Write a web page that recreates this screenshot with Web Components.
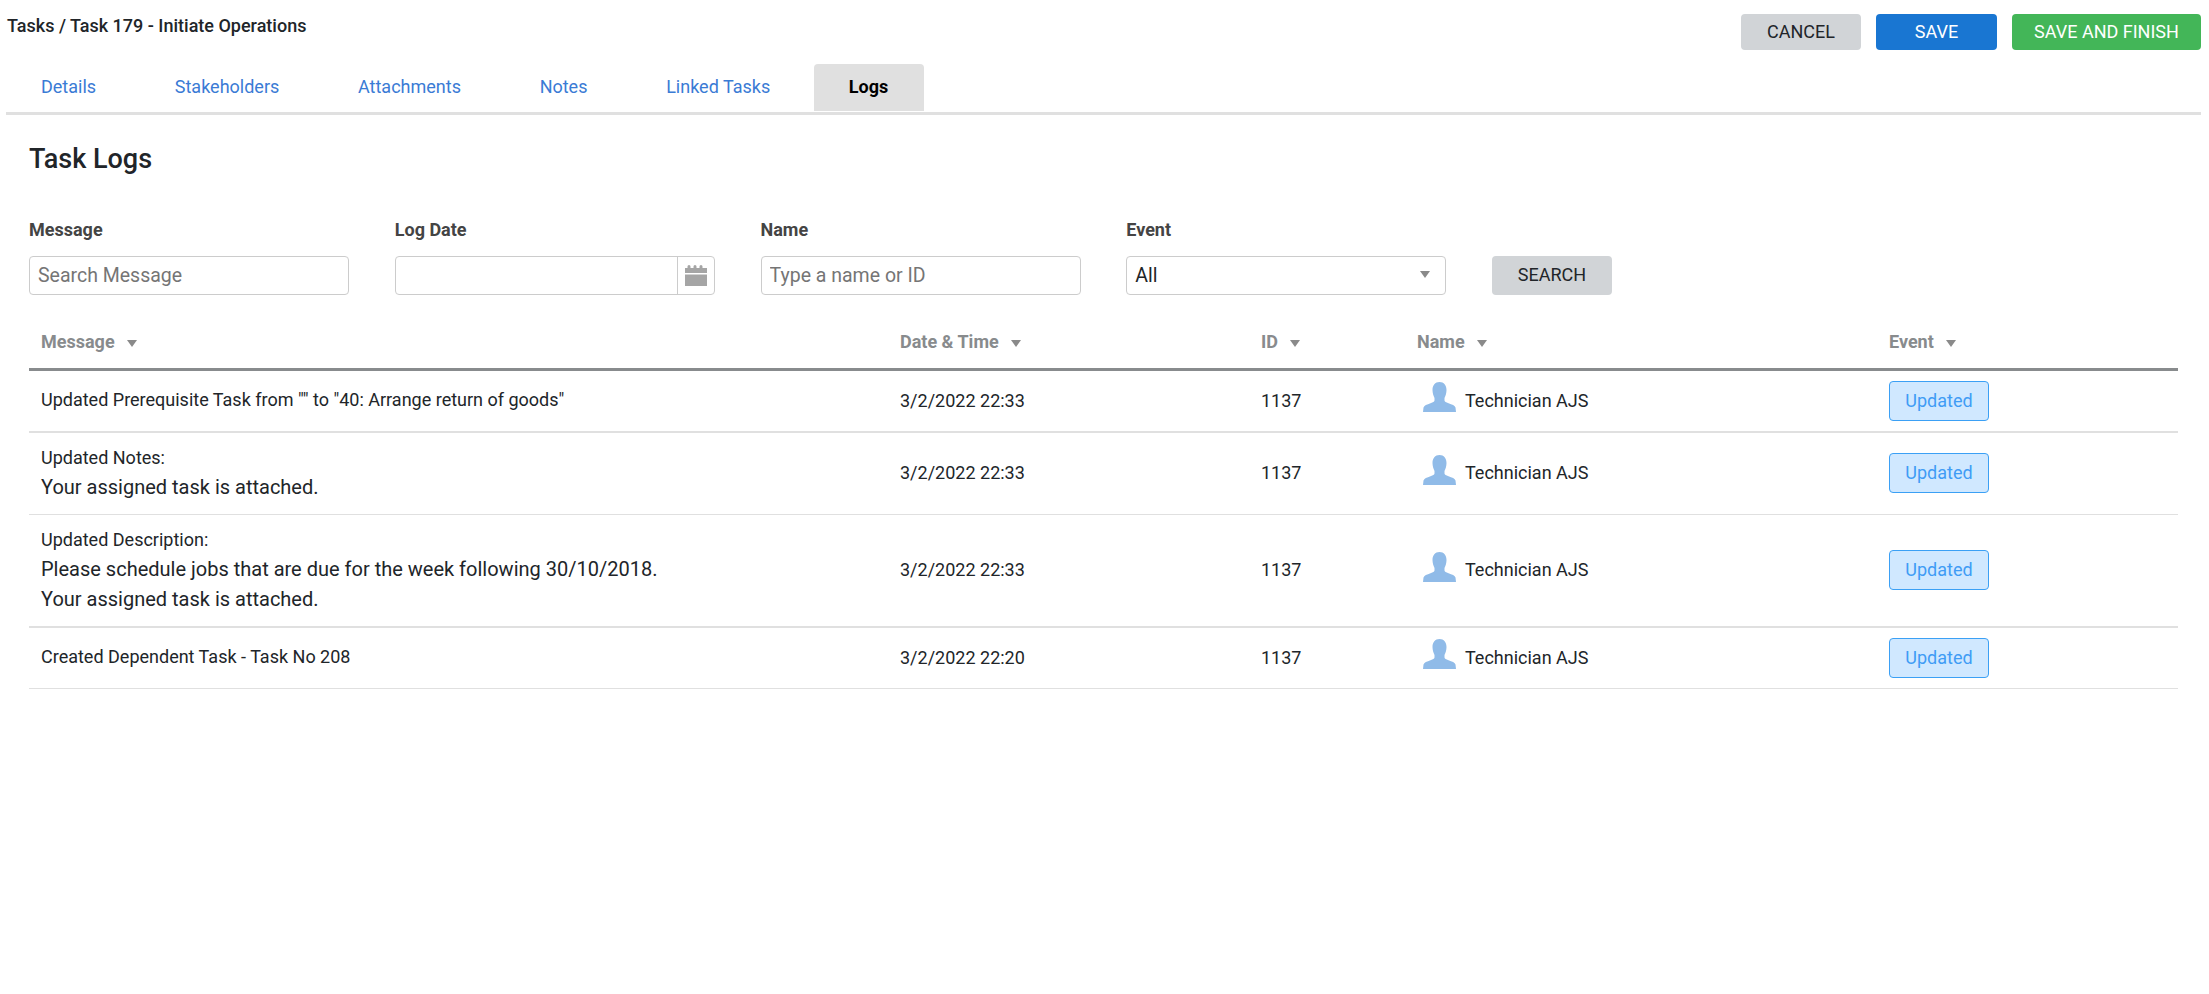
<!DOCTYPE html>
<html>
<head>
<meta charset="utf-8">
<title>Task Logs</title>
<style>
html,body{
    margin: 0;
    background: #fff;
    font-family: Roboto, "Liberation Sans", sans-serif;
    color: #212529;
}
</style>
</head>
<body>
<task-page>
    <page-header slot="header">
        Tasks / Task 179 - Initiate Operations
        <action-button slot="actions" kind="cancel" narrow>CANCEL</action-button>
        <action-button slot="actions" kind="save">SAVE</action-button>
        <action-button slot="actions" kind="finish" wide>SAVE AND FINISH</action-button>
    </page-header>
    <tab-bar slot="tabs">
        <tab-item>Details</tab-item>
        <tab-item>Stakeholders</tab-item>
        <tab-item>Attachments</tab-item>
        <tab-item>Notes</tab-item>
        <tab-item>Linked Tasks</tab-item>
        <tab-item active>Logs</tab-item>
    </tab-bar>
    <span slot="title">Task Logs</span>
    <log-filters slot="filters">
        <filter-field label="Message" placeholder="Search Message"></filter-field>
        <filter-field label="Log Date" type="date"></filter-field>
        <filter-field label="Name" placeholder="Type a name or ID"></filter-field>
        <filter-field label="Event" type="select" value="All"></filter-field>
        <action-button kind="cancel" search>SEARCH</action-button>
    </log-filters>
    <log-table slot="table">
        <log-head>
            <sort-label>Message</sort-label>
            <sort-label>Date &amp; Time</sort-label>
            <sort-label>ID</sort-label>
            <sort-label>Name</sort-label>
            <sort-label>Event</sort-label>
        </log-head>
        <log-row>
            <log-message>Updated Prerequisite Task from "" to "40: Arrange return of goods"</log-message>
            <span>3/2/2022 22:33</span>
            <span>1137</span>
            <log-user>Technician AJS</log-user>
            <event-badge>Updated</event-badge>
        </log-row>
        <log-row thin>
            <log-message>Updated Notes:<span slot="body">Your assigned task is attached.</span></log-message>
            <span>3/2/2022 22:33</span>
            <span>1137</span>
            <log-user>Technician AJS</log-user>
            <event-badge>Updated</event-badge>
        </log-row>
        <log-row>
            <log-message>Updated Description:<span slot="body">Please schedule jobs that are due for the week following 30/10/2018.<br>Your assigned task is attached.</span></log-message>
            <span>3/2/2022 22:33</span>
            <span>1137</span>
            <log-user>Technician AJS</log-user>
            <event-badge>Updated</event-badge>
        </log-row>
        <log-row thin>
            <log-message>Created Dependent Task - Task No 208</log-message>
            <span>3/2/2022 22:20</span>
            <span>1137</span>
            <log-user>Technician AJS</log-user>
            <event-badge>Updated</event-badge>
        </log-row>
    </log-table>
</task-page>

<script>
function define(name, html, setup) {
    const template = document.createElement('template');
    template.innerHTML = html;
    customElements.define(name, class extends HTMLElement {
        constructor() {
            super();
            this.attachShadow({mode: 'open'});
            this.shadowRoot.appendChild(template.content.cloneNode(true));
        }
        connectedCallback() {
            if (setup) setup(this, this.shadowRoot);
        }
    });
}

define('task-page', `
<style>
:host{
    display: block;
    padding: 0 8px 0 6px;
    --cols: 859px 361px 156px 472px 1fr;
}
.body{
    padding: 27px 23px 0;
}
h2{
    margin: 0 0 -1px;
    font-size: 27px;
    font-weight: 500;
    line-height: 34px;
}
</style>
<slot name="header"></slot>
<slot name="tabs"></slot>
<div class="body">
    <h2><slot name="title"></slot></h2>
    <slot name="filters"></slot>
    <slot name="table"></slot>
</div>
`);

define('page-header', `
<style>
:host{
    display: flex;
    justify-content: space-between;
    align-items: flex-start;
    padding-top: 14px;
    font-size: 18px;
    font-weight: 500;
}
.crumb{
    padding: 1px 0 0 1px;
    line-height: 22px;
}
.actions{
    display: flex;
    gap: 15px;
}
</style>
<div class="crumb"><slot></slot></div>
<div class="actions"><slot name="actions"></slot></div>
`);

define('action-button', `
<style>
:host{
    display: block;
    box-sizing: border-box;
    width: 121px;
    height: 36px;
    line-height: 36px;
    text-align: center;
    font-size: 18px;
    font-weight: 400;
    border-radius: 4px;
    cursor: pointer;
}
:host([kind=cancel]){
    background: #d1d4d7;
    color: #212529;
}
:host([kind=save]){
    background: #1976d2;
    color: #fff;
}
:host([kind=finish]){
    background: #43b658;
    color: #fff;
}
:host([narrow]){
    width: 120px;
}
:host([wide]){
    width: 189px;
}
:host([search]){
    width: 120px;
    height: 39px;
    line-height: 38px;
}
</style>
<slot></slot>
`);

define('tab-bar', `
<style>
:host{
    display: flex;
    gap: 8.7px;
    margin-top: 14px;
    padding-bottom: 1px;
    border-bottom: 3px solid #e0e0e0;
}
</style>
<slot></slot>
`);

define('tab-item', `
<style>
:host{
    display: block;
    height: 47px;
    line-height: 46px;
    padding: 0 35px;
    font-size: 18px;
    color: #3a7bd5;
    border-radius: 4px 4px 0 0;
    cursor: pointer;
}
:host([active]){
    padding-right: 36px;
    background: #e0e0e0;
    color: #000;
    font-weight: 700;
}
</style>
<slot></slot>
`);

define('log-filters', `
<style>
:host{
    display: flex;
    align-items: flex-end;
    gap: 45.75px;
    margin-top: 44px;
}
</style>
<slot></slot>
`);

define('filter-field', `
<style>
:host{
    display: block;
    width: 320px;
}
label{
    display: block;
    margin-bottom: 15px;
    font-size: 18px;
    font-weight: 700;
    line-height: 22px;
    color: #444;
}
.box{
    display: flex;
    align-items: center;
    box-sizing: border-box;
    height: 39px;
    border: 1px solid #ccc;
    border-radius: 4px;
    position: relative;
}
input,select{
    flex: 1;
    min-width: 0;
    height: 100%;
    padding: 0 8px;
    border: 0;
    outline: 0;
    background: transparent;
    font: 400 19.5px Roboto, "Liberation Sans", sans-serif;
    color: #212529;
    appearance: none;
}
input::placeholder{
    color: #757575;
    opacity: 1;
}
.addon{
    display: flex;
    align-items: center;
    justify-content: center;
    width: 36px;
    height: 100%;
    border-left: 1px solid #ccc;
}
.caret{
    position: absolute;
    right: 15px;
    top: 14px;
}
</style>
<label></label>
<div class="box"></div>
`, (host, root) => {
    root.querySelector('label').textContent = host.getAttribute('label');
    const box = root.querySelector('.box');
    const type = host.getAttribute('type');
    if (type === 'select') {
        box.innerHTML = `<select><option>${host.getAttribute('value')}</option></select>
            <svg class="caret" width="10" height="7" viewBox="0 0 10 7"><path d="M0 0h10L5 7z" fill="#8a8a8a"/></svg>`;
    } else {
        const input = document.createElement('input');
        input.placeholder = host.getAttribute('placeholder') || '';
        box.appendChild(input);
        if (type === 'date') {
            const addon = document.createElement('div');
            addon.className = 'addon';
            addon.innerHTML = `<svg width="22" height="21" viewBox="0 0 22 21" fill="#a5a5a5">
                <path d="M0 8V3h2.500V1.500a1.500 1.500 0 0 1 3 0V3h3V1.500a1.500 1.500 0 0 1 3 0V3h3V1.500a1.500 1.500 0 0 1 3 0V3H22v5z"/>
                <path d="M0 9.500h22V21H0z"/></svg>`;
            box.appendChild(addon);
        }
    }
});

define('log-table', `
<style>
:host{
    display: block;
    margin-top: 20px;
}
</style>
<slot></slot>
`);

define('log-head', `
<style>
:host{
    display: grid;
    grid-template-columns: var(--cols);
    align-items: center;
    height: 53px;
    border-bottom: 3px solid #888b8d;
}
</style>
<slot></slot>
`);

define('sort-label', `
<style>
:host{
    display: flex;
    align-items: center;
    gap: 12px;
    padding-left: 12px;
    font-size: 18px;
    font-weight: 700;
    color: #888b8d;
}
svg{
    margin-top: 3px;
}
</style>
<slot></slot>
<svg width="10" height="7" viewBox="0 0 10 7"><path d="M0 0h10L5 7z" fill="#8a8a8a"/></svg>
`);

define('log-row', `
<style>
:host{
    display: grid;
    grid-template-columns: var(--cols);
    align-items: center;
    padding: 10px 0;
    border-bottom: 2px solid #e0e0e0;
    font-size: 18px;
}
:host([thin]){
    border-bottom-width: 1px;
}
::slotted(span){
    padding-left: 12px;
    margin-bottom: 2px;
}
</style>
<slot></slot>
`);

define('log-message', `
<style>
:host{
    display: block;
    padding: 0 12px 1.500px;
    margin-top: -.5px;
    line-height: 30px;
    font-size: 18px;
}
.body{
    margin: -1px 0 1px;
    font-size: 20px;
}
</style>
<div><slot></slot></div>
<div class="body"><slot name="body"></slot></div>
`);

define('log-user', `
<style>
:host{
    display: flex;
    align-items: center;
    gap: 9px;
    padding-left: 18px;
    font-size: 18px;
}
svg{
    flex: none;
    margin-top: -8px;
}
.name{
    margin-bottom: 2px;
}
</style>
<svg width="33" height="30" viewBox="0 0 33 30" fill="#90bbe8">
    <path d="M16.500 0C12 0 9.500 3.500 9.500 8c0 3 1 6 2 8v2.500c0 1-1.500 1.800-4 2.700C4 22.400 1 23.500.500 25.500L0 30h33l-.5-4.500c-.5-2-3.500-3.100-7-4.300-2.500-.9-4-1.700-4-2.700V16c1-2 2-5 2-8C23.500 3.500 21 0 16.500 0z"/>
</svg>
<div class="name"><slot></slot></div>
`);

define('event-badge', `
<style>
:host{
    display: block;
    box-sizing: border-box;
    width: 100px;
    height: 40px;
    margin: -.5px 0 .5px 12px;
    line-height: 38px;
    text-align: center;
    font-size: 18px;
    color: #3f9cf5;
    background: #d0e8ff;
    border: 1px solid #3ba0f5;
    border-radius: 4px;
}
</style>
<slot></slot>
`);
</script>
</body>
</html>
